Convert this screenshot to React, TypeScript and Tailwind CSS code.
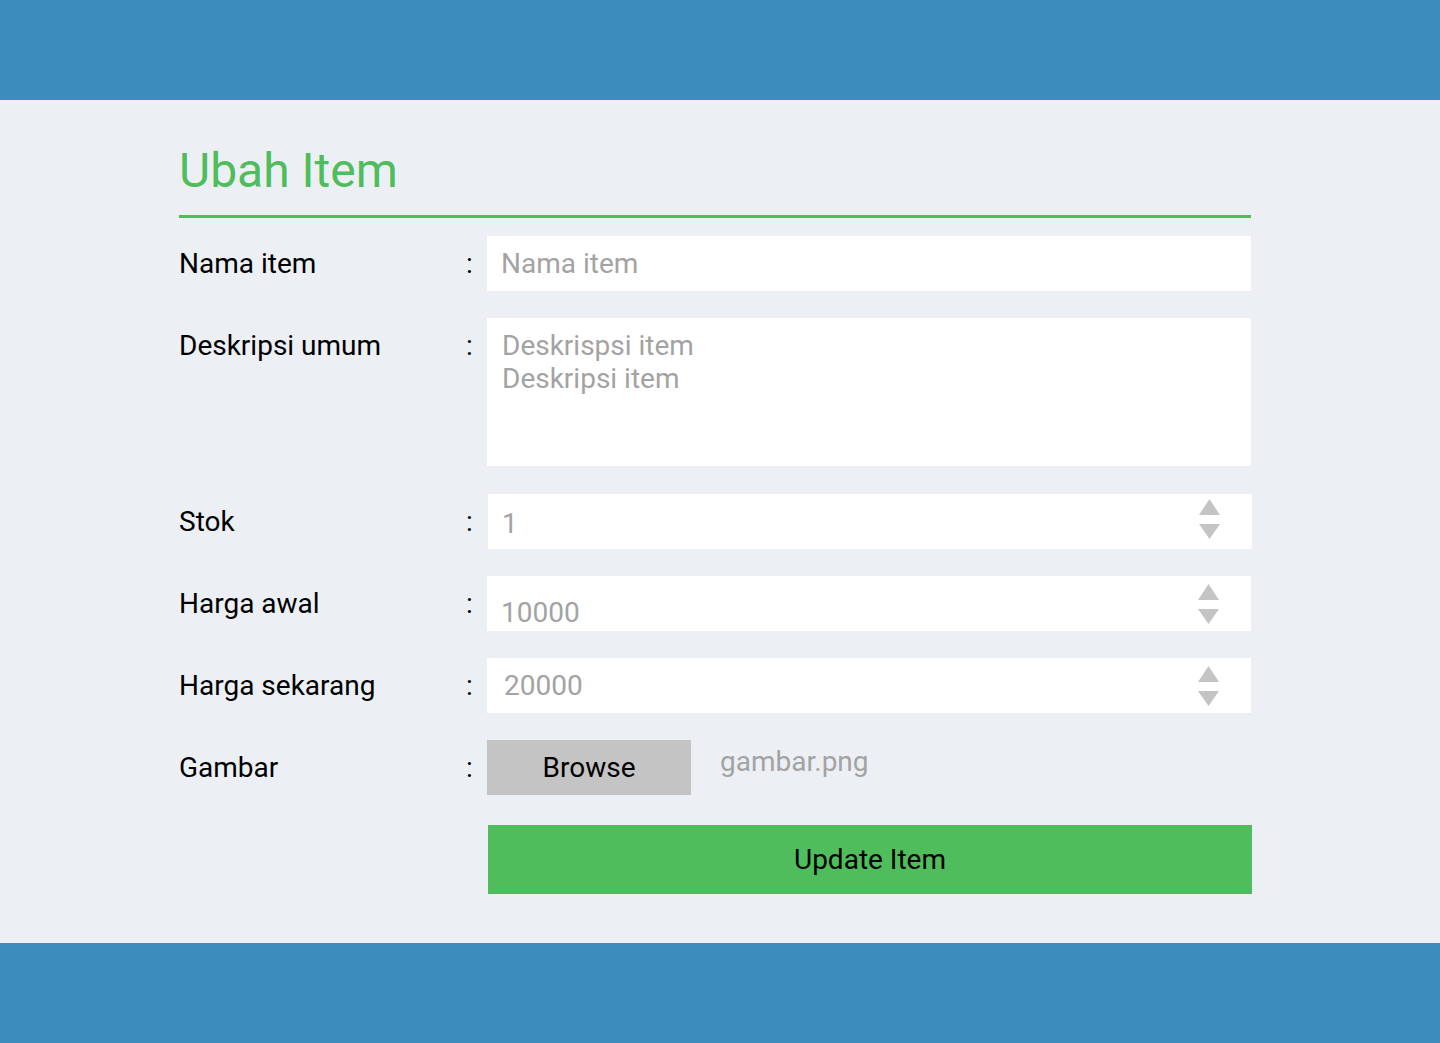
import React from 'react';

const font = { fontFamily: 'Roboto, "Noto Sans", sans-serif' };

const Spinner = ({ lift = '' }: { lift?: string }) => (
    <div className={`flex flex-col items-center gap-[9px] pr-[32px] ${lift}`}>
        <svg width="21" height="16" viewBox="0 0 21 16">
            <polygon points="10.5,0 21,16 0,16" fill="#c4c4c4" />
        </svg>
        <svg width="21" height="15" viewBox="0 0 21 15">
            <polygon points="0,0 21,0 10.5,15" fill="#c4c4c4" />
        </svg>
    </div>
);

const Row = ({ label, children, className = '' }: { label: string; children: React.ReactNode; className?: string }) => (
    <div className={`flex items-start ${className}`}>
        <div className="w-[287px] h-[55px] flex items-center text-[28px] text-black">{label}</div>
        <div className="w-[21px] h-[55px] flex items-center text-[28px] text-black">:</div>
        <div className="flex-1">{children}</div>
    </div>
);

const NumberField = ({ value, shift = '', lift = '', box = '' }: { value: string; shift?: string; lift?: string; box?: string }) => (
    <div className={`h-[55px] bg-white flex items-center justify-between ${box}`}>
        <span className={`pl-[14px] text-[28px] text-[#a3a3a3] ${shift}`}>{value}</span>
        <Spinner lift={lift} />
    </div>
);

export default function App() {
    return (
        <div className="min-h-[1043px] flex flex-col bg-[#ecf0f5]" style={font}>
            <div className="h-[100px] bg-[#3c8dbc]" />
            <main className="flex-1 pl-[179px] pr-[189px] pt-[40px]">
                <h1 className="text-[48px] leading-[62px] text-[#4fbd5b]">Ubah Item</h1>
                <div className="h-[3px] bg-[#4fbd5b] mt-[13px] mb-[18px]" />
                <div className="flex flex-col">
                    <Row label="Nama item">
                        <div className="h-[55px] bg-white flex items-center pl-[14px] text-[28px] text-[#a3a3a3]">
                            Nama item
                        </div>
                    </Row>
                    <Row label="Deskripsi umum" className="mt-[27px]">
                        <div className="h-[148px] bg-white pl-[15px] pt-[11px] text-[28px] leading-[33px] text-[#a3a3a3]">
                            <div>Deskrispsi item</div>
                            <div>Deskripsi item</div>
                        </div>
                    </Row>
                    <Row label="Stok" className="mt-[28px]">
                        <NumberField
                            value="1"
                            shift="translate-y-[2px]"
                            lift="-translate-y-[3px]"
                            box="translate-x-[1px]"
                        />
                    </Row>
                    <Row label="Harga awal" className="mt-[27px]">
                        <NumberField value="10000" shift="translate-y-[9px]" />
                    </Row>
                    <Row label="Harga sekarang" className="mt-[27px]">
                        <NumberField value="20000" shift="translate-x-[3px]" />
                    </Row>
                    <Row label="Gambar" className="mt-[27px]">
                        <div className="flex items-center">
                            <button className="w-[204px] h-[55px] bg-[#c4c4c4] text-[28px] text-black">Browse</button>
                            <span className="ml-[29px] -translate-y-[6px] text-[28px] text-[#a3a3a3]">gambar.png</span>
                        </div>
                    </Row>
                    <div className="flex mt-[30px] -mr-[1px]">
                        <div className="w-[309px]" />
                        <button className="flex-1 h-[69px] bg-[#4fbd5b] text-[28px] text-black">Update Item</button>
                    </div>
                </div>
            </main>
            <div className="h-[100px] bg-[#3c8dbc]" />
        </div>
    );
}
